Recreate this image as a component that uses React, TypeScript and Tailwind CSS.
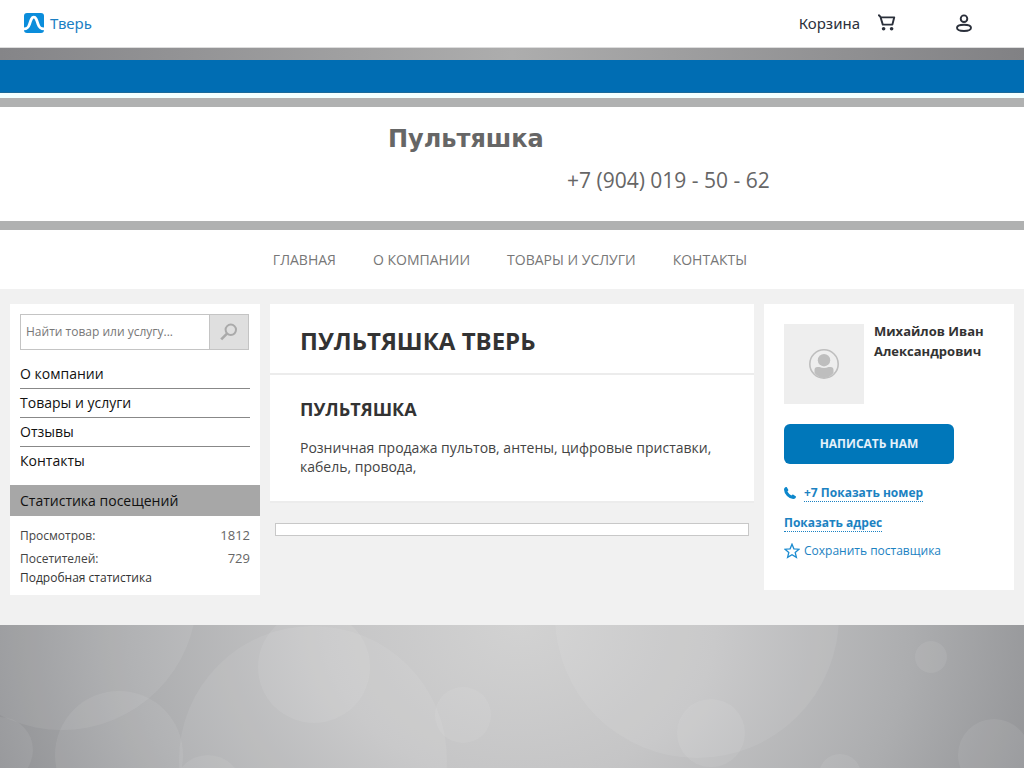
const siteMenu = ["ГЛАВНАЯ", "О КОМПАНИИ", "ТОВАРЫ И УСЛУГИ", "КОНТАКТЫ"];
const sideMenu = ["О компании", "Товары и услуги", "Отзывы", "Контакты"];

function Logo() {
  return (
    <svg width="20" height="20" viewBox="0 0 20 20" aria-hidden="true">
      <rect width="20" height="20" rx="3" fill="#0b8ddb" />
      <path d="M0 15.8C3.4 15.8 4.4 14.6 5.6 11C7 6.6 7.8 4.2 9.8 4.2S12.6 6.6 14 11C15.2 14.6 16.4 15.8 20 15.8" fill="none" stroke="#fff" strokeWidth="2.8" />
    </svg>
  );
}

function CartIcon() {
  return (
    <svg width="18" height="18" viewBox="0 0 18 18" fill="none" stroke="#2b303b" strokeWidth="1.9" aria-hidden="true">
      <path d="M0.3 0.8L2.4 2.8L4.8 10.6H14.4L16.2 3.4H2.8" strokeLinejoin="round" />
      <circle cx="5.6" cy="14.7" r="1.8" fill="#2b303b" stroke="none" />
      <circle cx="13.6" cy="14.7" r="1.8" fill="#2b303b" stroke="none" />
    </svg>
  );
}

function UserIcon() {
  return (
    <svg width="16" height="18" viewBox="0 0 16 18" fill="none" stroke="#2b303b" strokeWidth="1.9" aria-hidden="true">
      <circle cx="8" cy="4.7" r="3.3" />
      <path d="M8 10.8C4 10.8 1 11.2 1 13.8S3.5 17 8 17S15 16.4 15 13.8S12 10.8 8 10.8Z" />
    </svg>
  );
}

function SearchIcon() {
  return (
    <svg width="18" height="18" viewBox="0 0 18 18" fill="none" stroke="#aaa" aria-hidden="true">
      <circle cx="10.8" cy="6.8" r="5.2" strokeWidth="2" />
      <path d="M7 10.6L1.2 16.4" strokeWidth="2.6" />
    </svg>
  );
}

function Bokeh() {
  return (
    <svg className="block h-full w-full" viewBox="0 0 1024 143" preserveAspectRatio="xMidYMin slice" aria-hidden="true">
      <defs>
        <radialGradient id="glow" gradientUnits="userSpaceOnUse" cx="520" cy="0" r="560" gradientTransform="scale(1 0.8)">
          <stop offset="0" stopColor="#d2d2d2" />
          <stop offset="0.35" stopColor="#c5c5c6" />
          <stop offset="0.7" stopColor="#acadaf" />
          <stop offset="1" stopColor="#909194" />
        </radialGradient>
      </defs>
      <rect width="1024" height="143" fill="url(#glow)" />
      <g fill="#fff" fillOpacity="0.07">
        <circle cx="62" cy="-30" r="135" />
        <circle cx="119" cy="130" r="64" />
        <circle cx="313" cy="135" r="134" />
        <circle cx="314" cy="42" r="56" />
        <circle cx="463" cy="90" r="28" />
        <circle cx="697" cy="-9" r="142" />
        <circle cx="711" cy="108" r="34" />
        <circle cx="931" cy="32" r="16" />
        <circle cx="994" cy="130" r="36" />
        <circle cx="840" cy="150" r="21" />
        <circle cx="208" cy="164" r="34" />
        <circle cx="0" cy="125" r="33" />
      </g>
    </svg>
  );
}

export default function App() {
  return (
    <div className="flex min-h-screen flex-col bg-white font-['Open_Sans',sans-serif] text-sm text-[#333]">
      <header className="flex h-12 items-center justify-between border-b border-[#ddd] pr-13 pl-6 font-['Noto_Sans',sans-serif] text-[15px]">
        <a href="#" className="flex items-center gap-1.5 text-[#1b7fc4]">
          <Logo />
          Тверь
        </a>
        <div className="flex items-center">
          <a href="#" className="flex items-center gap-[18px] text-[#2b303b]">
            Корзина
            <CartIcon />
          </a>
          <button type="button" aria-label="Профиль" className="ml-15">
            <UserIcon />
          </button>
        </div>
      </header>
      <div className="h-3 bg-linear-to-r from-[#858588] via-[#adadad] to-[#818184]" />
      <div className="h-[33px] border-b border-[#19699a] bg-[#006db3]" />
      <div className="h-[5px] bg-[#f2ffff]" />
      <div className="border-y-[9px] border-[#b0b1b1]">
        <div className="mx-auto flex h-[114px] w-full max-w-[248px] flex-col items-start pt-3.5">
          <p className="font-['DejaVu_Sans',sans-serif] text-2xl leading-9 font-bold text-[#666]">Пультяшка</p>
          <p className="ml-[179px] pt-[7px] text-[21px] leading-8 whitespace-nowrap text-[#666]">+7 (904) 019 - 50 - 62</p>
        </div>
      </div>
      <nav className="flex h-[59px] items-center justify-center gap-[37px] pr-1">
        {siteMenu.map((item) => (
          <a key={item} href="#" className="text-[#777]">
            {item}
          </a>
        ))}
      </nav>

      <div className="flex items-start gap-2.5 bg-[#f1f1f1] px-2.5 pt-[15px] pb-[30px]">
        <aside className="w-[250px] shrink-0 bg-white pt-2.5 pb-[9px]">
          <form className="mr-[11px] ml-2.5 flex h-9 border border-[#c4c4c4]">
            <input
              type="text"
              aria-label="Поиск"
              placeholder="Найти товар или услугу..."
              className="min-w-0 flex-1 px-[5px] text-xs outline-none placeholder:text-[#777]"
            />
            <button type="button" aria-label="Найти" className="flex w-[39px] items-center justify-center border-l border-[#c4c4c4] bg-[#dfdfdf]">
              <SearchIcon />
            </button>
          </form>
          <ul className="mx-2.5 mt-2.5">
            {sideMenu.map((item) => (
              <li key={item} className="border-b border-[#888] last:border-b-0">
                <a href="#" className="block h-7 leading-7 text-[#111]">
                  {item}
                </a>
              </li>
            ))}
          </ul>
          <h2 className="mt-2.5 h-[31px] bg-[#a7a7a7] px-2.5 leading-8 text-[#111]">Статистика посещений</h2>
          <dl className="mx-2.5 mt-2 text-xs leading-[23px] text-[#444]">
            <div className="flex justify-between">
              <dt>Просмотров:</dt>
              <dd className="text-[13px] text-[#666]">1812</dd>
            </div>
            <div className="flex justify-between">
              <dt>Посетителей:</dt>
              <dd className="text-[13px] text-[#666]">729</dd>
            </div>
          </dl>
          <a href="#" className="mx-2.5 block text-xs leading-4 text-[#333]">
            Подробная статистика
          </a>
        </aside>

        <main className="min-w-0 flex-1">
          <div className="border-b-2 border-[#ececec] bg-white">
            <h1 className="flex h-[71px] items-center border-b-2 border-[#ececec] px-[30px] pt-1 text-2xl font-bold text-[#333]">ПУЛЬТЯШКА ТВЕРЬ</h1>
            <div className="px-[30px] pt-5 pb-[25px]">
              <h2 className="text-lg leading-7 font-bold text-[#333]">ПУЛЬТЯШКА</h2>
              <p className="mt-[15px] leading-[19px] text-[#444]">Розничная продажа пультов, антены, цифровые приставки, кабель, провода,</p>
            </div>
          </div>
          <div className="mx-[5px] mt-5 h-[13px] border border-[#c8c8c8] bg-white" />
        </main>

        <aside className="w-[250px] shrink-0 bg-white px-5 pt-5 pb-[30px]">
          <div className="flex gap-2.5">
            <div className="flex size-20 shrink-0 items-center justify-center bg-[#eee]">
              <svg width="30" height="30" viewBox="0 0 30 30" aria-hidden="true">
                <circle cx="15" cy="15" r="14.2" fill="none" stroke="#bebebe" strokeWidth="1.6" />
                <circle cx="15" cy="11.2" r="6.2" fill="#bebebe" />
                <path d="M5.5 24V21Q5.5 18 8.5 18H10.5Q15 19.8 19.5 18H21.5Q24.5 18 24.5 21V24Q20.5 29 15 29T5.5 24Z" fill="#bebebe" />
              </svg>
            </div>
            <p className="-mt-[3px] text-[13px] leading-5 font-bold">Михайлов Иван Александрович</p>
          </div>
          <button type="button" className="mt-5 h-10 w-[170px] rounded-md bg-[#0077ba] text-xs font-bold text-[#e4f1fa]">
            НАПИСАТЬ НАМ
          </button>
          <div className="mt-5 flex items-center gap-2 text-xs font-bold text-[#1b82c2]">
            <svg width="12" height="12" viewBox="0 0 12 12" fill="#0d87cc" aria-hidden="true">
              <path d="M0.2 1.4Q0.9 0 2.7 0L4.4 3.1Q4.3 4 3.4 4.6Q4.8 7.2 7.4 8.4Q8.3 7.4 9 7.5L12 9.4Q12.1 11.3 10.5 11.8Q6.8 12.6 3 8.9Q-0.7 5 0.2 1.4Z" />
            </svg>
            <a href="#" className="border-b border-dotted border-[#1b82c2] leading-[17px]">
              +7 Показать номер
            </a>
          </div>
          <div className="mt-3 flex text-xs font-bold text-[#1b82c2]">
            <a href="#" className="border-b border-dotted border-[#1b82c2] leading-[17px]">
              Показать адрес
            </a>
          </div>
          <a href="#" className="mt-2.5 flex items-center gap-1 text-xs leading-[18px] text-[#1b82c2]">
            <svg width="16" height="16" viewBox="0 0 16 16" fill="none" stroke="#1b8bd0" strokeWidth="1.3" aria-hidden="true">
              <path d="M8 1.2L9.9 5.8L15 6.2L11.2 9.5L12.4 14.4L8 11.8L3.6 14.4L4.8 9.5L1 6.2L6.1 5.8Z" />
            </svg>
            Сохранить поставщика
          </a>
        </aside>
      </div>

      <footer className="grid min-h-[143px] flex-1">
        <Bokeh />
      </footer>
    </div>
  );
}
